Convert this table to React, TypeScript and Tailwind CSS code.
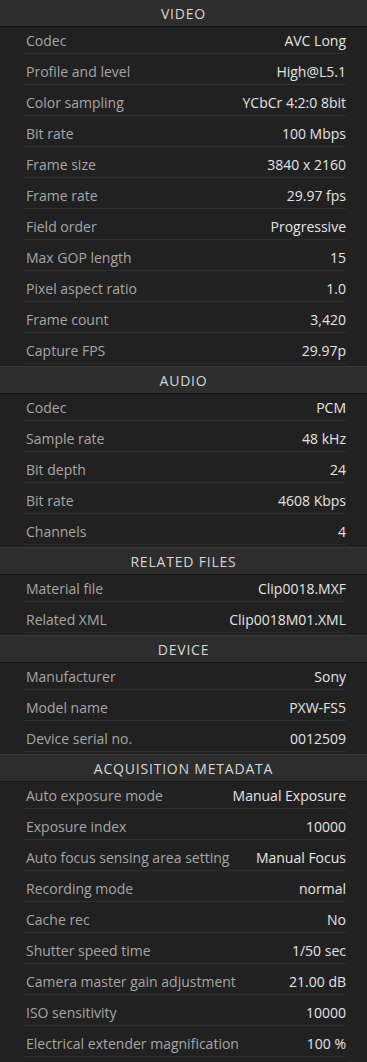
import React from "react";

type Row = [string, string];

const SECTIONS: { title: string; rows: Row[] }[] = [
  {
    title: "VIDEO",
    rows: [
      ["Codec", "AVC Long"],
      ["Profile and level", "High@L5.1"],
      ["Color sampling", "YCbCr 4:2:0 8bit"],
      ["Bit rate", "100 Mbps"],
      ["Frame size", "3840 x 2160"],
      ["Frame rate", "29.97 fps"],
      ["Field order", "Progressive"],
      ["Max GOP length", "15"],
      ["Pixel aspect ratio", "1.0"],
      ["Frame count", "3,420"],
      ["Capture FPS", "29.97p"],
    ],
  },
  {
    title: "AUDIO",
    rows: [
      ["Codec", "PCM"],
      ["Sample rate", "48 kHz"],
      ["Bit depth", "24"],
      ["Bit rate", "4608 Kbps"],
      ["Channels", "4"],
    ],
  },
  {
    title: "RELATED FILES",
    rows: [
      ["Material file", "Clip0018.MXF"],
      ["Related XML", "Clip0018M01.XML"],
    ],
  },
  {
    title: "DEVICE",
    rows: [
      ["Manufacturer", "Sony"],
      ["Model name", "PXW-FS5"],
      ["Device serial no.", "0012509"],
    ],
  },
  {
    title: "ACQUISITION METADATA",
    rows: [
      ["Auto exposure mode", "Manual Exposure"],
      ["Exposure index", "10000"],
      ["Auto focus sensing area setting", "Manual Focus"],
      ["Recording mode", "normal"],
      ["Cache rec", "No"],
      ["Shutter speed time", "1/50 sec"],
      ["Camera master gain adjustment", "21.00 dB"],
      ["ISO sensitivity", "10000"],
      ["Electrical extender magnification", "100 %"],
    ],
  },
];

const Section: React.FC<{ title: string; rows: Row[]; first: boolean }> = ({ title, rows, first }) => (
  <div className={first ? "" : "mt-[2px]"}>
    <div
      className={`flex h-[27px] items-center justify-center border-b border-[#131313] bg-[#2d2d2d] text-[14px] tracking-[0.8px] text-[#d6d6d6] ${
        first ? "" : "h-[28px] border-t border-t-[#3b3b3b]"
      }`}
    >
      {title}
    </div>
    <div className="flex flex-col gap-[4px]">
      {rows.map(([label, value], i) => (
        <div
          key={i}
          className="ml-[24px] mr-[21px] flex h-[27px] items-center justify-between border-b border-[#2e2e2e] pl-[2px] text-[14px]"
        >
          <span className="text-[#a6a6a6]">{label}</span>
          <span className="text-[#e4e4e4]">{value}</span>
        </div>
      ))}
    </div>
  </div>
);

export default function App() {
  return (
    <div
      className="min-h-[1062px] w-[367px] bg-[#212121]"
      style={{ fontFamily: '"Open Sans", "Noto Sans", sans-serif' }}
    >
      {SECTIONS.map((s, i) => (
        <Section key={s.title} title={s.title} rows={s.rows} first={i === 0} />
      ))}
    </div>
  );
}
